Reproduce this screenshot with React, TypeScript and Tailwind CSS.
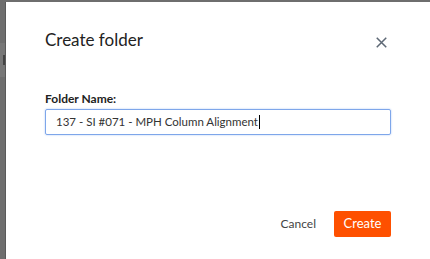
export default function App() {
  return (
    <div className="flex h-[259px] w-[430px] overflow-hidden bg-[#6e6e6e] font-['Lato','Liberation_Sans',sans-serif]">
      {/* backdrop edge on the left */}
      <div className="flex w-[5px] flex-col">
        <div className="h-[43px] bg-[#6e6e6e]" />
        <div className="flex h-[34px] items-center justify-end bg-[#777777]">
          <div className="h-[10px] w-[2px] bg-[#444444]" />
        </div>
        <div className="flex-1 bg-[#6e6e6e]" />
      </div>

      <div className="mt-[2px] flex flex-1 flex-col border-l border-[#5a5a5a] bg-white pl-[39px] pr-[39px] pt-[26px]">
        <div className="flex h-[24px] items-start justify-between">
          <h2 className="text-[17px] leading-[24px] text-[#222222]">Create folder</h2>
          <button className="mt-[4px] flex h-[20px] w-[20px] items-center justify-center text-[#5d6875]">
            <svg width="11" height="11" viewBox="0 0 11 11" fill="none" stroke="currentColor" strokeWidth="1.5">
              <path d="M0.75 0.75L10.25 10.25M10.25 0.75L0.75 10.25" />
            </svg>
          </button>
        </div>

        <label className="mt-[39px] mb-[3px] block text-[12px] font-bold leading-[15px] text-[#222222]">
          Folder Name:
        </label>
        <div className="flex h-[26px] items-center rounded-[2px] border border-[#7ea6ea] pl-[10px] text-[11.5px] text-[#333333] shadow-[0_0_2px_#a9c4f3]">
          <span>137 - SI #071 - MPH Column Alignment</span>
          <span className="ml-[1px] h-[14px] w-[1px] bg-black" />
        </div>

        <div className="mt-[76px] flex items-center justify-end gap-[18px]">
          <button className="text-[12px] text-[#444444]">Cancel</button>
          <button className="h-[26px] w-[57px] rounded-[2px] bg-[#fe5000] text-[13px] text-white">Create</button>
        </div>
      </div>
    </div>
  );
}
